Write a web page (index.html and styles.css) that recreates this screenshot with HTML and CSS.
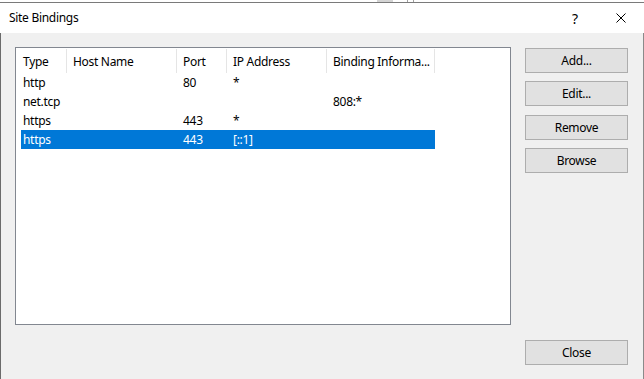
FILE: index.html
```html
<!DOCTYPE html>
<html lang="en">
<head>
    <meta charset="UTF-8">
    <meta name="viewport" content="width=device-width, initial-scale=1.0">
    <title>Site Bindings</title>
    <link rel="stylesheet" href="styles.css">
</head>
<body>
    <div class="behind">
        <span class="behind-block"></span>
        <span class="behind-line"></span>
        <span class="behind-line second"></span>
    </div>

    <div class="window">
        <div class="titlebar">
            <span class="title">Site Bindings</span>
            <span class="title-button help">?</span>
            <span class="title-button close">
                <svg width="10" height="10" viewBox="0 0 10 10">
                    <path d="M0.5 0.5 L9.5 9.5 M9.5 0.5 L0.5 9.5" stroke="#000" stroke-width="1" fill="none"/>
                </svg>
            </span>
        </div>

        <div class="client">
            <div class="list">
                <div class="list-header">
                    <div class="col col-type">Type</div>
                    <div class="col col-host">Host Name</div>
                    <div class="col col-port">Port</div>
                    <div class="col col-ip">IP Address</div>
                    <div class="col col-info">Binding Informa...</div>
                </div>
                <div class="row">
                    <div class="cell cell-type">http</div>
                    <div class="cell cell-host"></div>
                    <div class="cell cell-port">80</div>
                    <div class="cell cell-ip">*</div>
                    <div class="cell cell-info"></div>
                </div>
                <div class="row">
                    <div class="cell cell-type">net.tcp</div>
                    <div class="cell cell-host"></div>
                    <div class="cell cell-port"></div>
                    <div class="cell cell-ip"></div>
                    <div class="cell cell-info">808:*</div>
                </div>
                <div class="row">
                    <div class="cell cell-type">https</div>
                    <div class="cell cell-host"></div>
                    <div class="cell cell-port">443</div>
                    <div class="cell cell-ip">*</div>
                    <div class="cell cell-info"></div>
                </div>
                <div class="row selected">
                    <div class="cell cell-type">https</div>
                    <div class="cell cell-host"></div>
                    <div class="cell cell-port">443</div>
                    <div class="cell cell-ip">[::1]</div>
                    <div class="cell cell-info"></div>
                </div>
            </div>

            <div class="actions">
                <button class="button">Add...</button>
                <button class="button">Edit...</button>
                <button class="button">Remove</button>
                <button class="button">Browse</button>
                <button class="button close-button">Close</button>
            </div>
        </div>
    </div>
</body>
</html>
```

FILE: styles.css
```css
body {
    margin: 0;
    padding: 0;
    background-color: #fff;
    font-family: "Noto Sans", "Open Sans", sans-serif;
    font-size: 12px;
    letter-spacing: -0.3px;
    color: #000;
    overflow: hidden;
}

/* window behind the dialog, only a sliver shows */
.behind {
    display: flex;
    height: 2px;
}

.behind-block {
    width: 16px;
    margin-left: 377px;
    background-color: #d4d4d4;
}

.behind-line {
    width: 1px;
    margin-left: 14px;
    background-color: #a0a0a0;
}

.behind-line.second {
    margin-left: 5px;
}

.window {
    width: 644px;
    height: 377px;
    display: flex;
    flex-direction: column;
}

.titlebar {
    height: 30px;
    border-top: 1px solid #7a7a7a;
    background-color: #fff;
    display: flex;
    align-items: center;
}

.title {
    flex: 1;
    padding-left: 9px;
    padding-bottom: 1px;
}

.title-button {
    width: 46px;
    height: 30px;
    display: flex;
    justify-content: center;
    align-items: center;
}

.help {
    font-size: 14px;
}

.client {
    flex: 1;
    display: flex;
    background-color: #f0f0f0;
    border-left: 1px solid #6b6b6b;
    border-right: 1px solid #8a8a8a;
    padding: 14px 0 0 14px;
}

.list {
    width: 496px;
    height: 278px;
    box-sizing: border-box;
    border: 1px solid #828790;
    background-color: #fff;
}

.list-header {
    display: flex;
    align-items: flex-end;
    height: 25px;
}

.col {
    height: 24px;
    box-sizing: border-box;
    border-right: 1px solid #e5e5e5;
    padding-left: 6px;
    display: flex;
    align-items: center;
    white-space: nowrap;
    overflow: hidden;
}

.col-type { width: 51px; padding-left: 7px; }
.col-host { width: 110px; }
.col-port { width: 50px; }
.col-ip { width: 100px; }
.col-info { width: 108px; }

.row {
    display: flex;
    height: 19px;
    width: 414px;
    margin-left: 5px;
}

.row.selected {
    background-color: #0078d7;
    color: #fff;
}

.cell {
    box-sizing: border-box;
    padding-left: 6px;
    display: flex;
    align-items: center;
    white-space: nowrap;
}

.cell-type { width: 46px; padding-left: 2px; }
.cell-host { width: 110px; }
.cell-port { width: 50px; }
.cell-ip { width: 100px; }
.cell-info { width: 108px; }

.actions {
    display: flex;
    flex-direction: column;
    gap: 8.4px;
    margin-left: 14px;
    margin-top: 1px;
    height: 317px;
}

.button {
    width: 103px;
    height: 25px;
    box-sizing: border-box;
    background-color: #e1e1e1;
    border: 1px solid #adadad;
    border-radius: 0;
    padding: 0;
    font-family: inherit;
    font-size: 12px;
    letter-spacing: inherit;
    color: #000;
}

.close-button {
    margin-top: auto;
}
```
